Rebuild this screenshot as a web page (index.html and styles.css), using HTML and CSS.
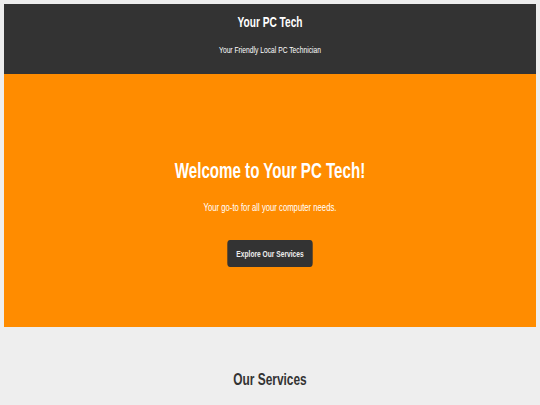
FILE: index.html
```html
<!DOCTYPE html>
<html lang="en">
<head>
  <meta charset="UTF-8">
  <title>Your PC Tech</title>
  <meta name="viewport" content="width=device-width, initial-scale=1.0">
  <link rel="stylesheet" href="styles.css">
</head>
<body>

  <header class="site-header">
    <div class="narrow">
      <h1>Your PC Tech</h1>
      <p>Your Friendly Local PC Technician</p>
    </div>
  </header>

  <section class="hero">
    <div class="narrow">
      <h2>Welcome to Your PC Tech!</h2>
      <p>Your go-to for all your computer needs.</p>
      <a class="btn" href="#services">Explore Our Services</a>
    </div>
  </section>

  <section class="services" id="services">
    <div class="narrow">
      <h2>Our Services</h2>
    </div>
  </section>

</body>
</html>
```

FILE: styles.css
```css
/* base */
body {
  margin: 4px;
  font-family: "Liberation Sans", Arial, sans-serif;
  background: #eee;
  color: #333;
}

/* text is set narrow, like the original layout */
.narrow {
  transform: scaleX(0.7);
  text-align: center;
}

/* header */
.site-header {
  background: #333;
  color: #fff;
  padding: 10px 0 18px;
}
.site-header h1 {
  margin: 0;
  font-size: 14.5px;
  line-height: 17px;
}
.site-header p {
  margin: 13px 0 0;
  font-size: 9.6px;
  line-height: 12px;
}

/* hero */
.hero {
  background: #ff8c00;
  color: #fff;
  padding: 84px 0 60px;
}
.hero h2 {
  margin: 0;
  font-size: 21.6px;
  line-height: 25px;
}
.hero p {
  margin: 17px 0 0;
  font-size: 11px;
  line-height: 14px;
}
.btn {
  display: inline-block;
  margin-top: 26px;
  padding: 0 13px;
  height: 27px;
  line-height: 27px;
  background: #333;
  color: #eee;
  border-radius: 4px;
  font-size: 9.5px;
  font-weight: bold;
  text-decoration: none;
}

/* services */
.services {
  padding: 43px 0 40px;
}
.services h2 {
  margin: 0;
  font-size: 17px;
  line-height: 19px;
}
```
